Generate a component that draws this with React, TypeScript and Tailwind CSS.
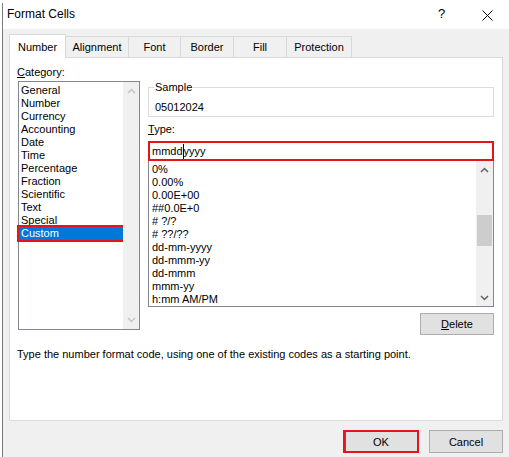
import React from "react";

const categories = ["General", "Number", "Currency", "Accounting", "Date", "Time", "Percentage", "Fraction", "Scientific", "Text", "Special", "Custom"];
const formats = ["0%", "0.00%", "0.00E+00", "##0.0E+0", "# ?/?", "# ??/??", "dd-mm-yyyy", "dd-mmm-yy", "dd-mmm", "mmm-yy", "h:mm AM/PM"];
const tabs = [
  { label: "Number", w: "w-[57px]" },
  { label: "Alignment", w: "w-[64px]" },
  { label: "Font", w: "w-[53px]" },
  { label: "Border", w: "w-[54px]" },
  { label: "Fill", w: "w-[54px]" },
  { label: "Protection", w: "w-[66px]" },
];

const Chevron = ({ up, color }: { up?: boolean; color: string }) => (
  <svg width="9" height="6" viewBox="0 0 9 6">
    <polyline
      points={up ? "1,5 4.5,1.5 8,5" : "1,1 4.5,4.5 8,1"}
      fill="none"
      stroke={color}
      strokeWidth="1.5"
    />
  </svg>
);

export default function App() {
  return (
    <div className="w-[509px] h-[457px] bg-white overflow-hidden font-['Liberation_Sans',Arial,sans-serif] text-[11px] text-black">
      <div className="ml-[2px] mt-[3px] h-[454px] border-l border-[#7a7a7a] bg-[#f0f0f0] flex flex-col">
        {/* Title bar */}
        <div className="h-[26px] shrink-0 bg-white flex items-start pt-[4px] pl-[4px] leading-[14px]">
          <span className="flex-1 text-[12px]">Format Cells</span>
          <span className="w-[12px] text-[13px] mr-[32px]">?</span>
          <svg width="11" height="11" viewBox="0 0 11 11" className="mt-[3px] mr-[16px]">
            <path d="M0.5 0.5 L10.5 10.5 M10.5 0.5 L0.5 10.5" stroke="#000" strokeWidth="1" />
          </svg>
        </div>

        {/* Tabs */}
        <div className="h-[28px] shrink-0 flex items-end pl-[6px]">
          {tabs.map((t, i) =>
            i === 0 ? (
              <div
                key={t.label}
                className={`${t.w} h-[24px] -mb-px relative z-10 bg-white border border-b-0 border-[#d9d9d9] flex items-center justify-center leading-[14px]`}
              >
                {t.label}
              </div>
            ) : (
              <div
                key={t.label}
                className={`${t.w} h-[21px] -ml-px bg-[#f0f0f0] border border-b-0 border-[#d9d9d9] flex items-center justify-center leading-[14px]`}
              >
                {t.label}
              </div>
            )
          )}
        </div>

        {/* Tab panel */}
        <div className="ml-[6px] w-[494px] h-[364px] shrink-0 bg-white border border-[#d9d9d9] flex flex-col">
          <div className="flex">
            {/* Category */}
            <div className="pt-[8px] pl-[7px]">
              <div className="leading-[13px]">
                <span className="underline">C</span>ategory:
              </div>
              <div className="mt-[2px] ml-[1px] w-[122px] h-[249px] border border-[#828790] flex">
                <div className="flex-1 pt-[2px]">
                  {categories.map((c) =>
                    c === "Custom" ? (
                      <div key={c} className="h-[13px] leading-[13px] pl-[2px] bg-[#0078d7] text-white outline-2 outline-[#e8121d]">
                        {c}
                      </div>
                    ) : (
                      <div key={c} className="h-[13px] leading-[13px] pl-[2px]">
                        {c}
                      </div>
                    )
                  )}
                </div>
                <div className="w-[16px] bg-[#f0f0f0] flex flex-col justify-between items-center py-[6px]">
                  <Chevron up color="#c4c4c4" />
                  <Chevron color="#c4c4c4" />
                </div>
              </div>
            </div>

            {/* Right column */}
            <div className="ml-[8px] w-[346px] pt-[22px] flex flex-col">
              <fieldset className="h-[37px] border border-[#dcdcdc] px-[5px]">
                <legend className="px-[1px] leading-[14px]">Sample</legend>
                <div className="leading-[14px] pt-[6px] pl-[1px]">05012024</div>
              </fieldset>

              <div className="mt-[6px] leading-[13px]">
                <span className="underline">T</span>ype:
              </div>
              <div className="mt-[5px] h-[20px] border-2 border-[#e8121d] bg-white flex items-center pl-[2px] leading-[14px]">
                <span>mmdd</span>
                <span className="w-px h-[15px] bg-black"></span>
                <span>yyyy</span>
              </div>
              <div className="h-[146px] border border-t-0 border-[#828790] flex">
                <div className="flex-1 pt-[2px] pl-[3px]">
                  {formats.map((f) => (
                    <div key={f} className="h-[13px] leading-[13px] whitespace-pre">
                      {f}
                    </div>
                  ))}
                </div>
                <div className="w-[17px] bg-[#f0f0f0] flex flex-col">
                  <div className="h-[17px] flex items-center justify-center">
                    <Chevron up color="#606060" />
                  </div>
                  <div className="mt-[37px] mx-[1px] h-[31px] bg-[#cdcdcd]"></div>
                  <div className="flex-1"></div>
                  <div className="h-[17px] flex items-center justify-center">
                    <Chevron color="#606060" />
                  </div>
                </div>
              </div>
              <div className="mt-[6px] self-end w-[74px] h-[22px] bg-[#e1e1e1] border border-[#adadad] flex items-center justify-center leading-[14px]">
                <span className="underline">D</span>elete
              </div>
            </div>
          </div>

          <div className="mt-[12px] pl-[7px] leading-[14px]">
            Type the number format code, using one of the existing codes as a starting point.
          </div>
        </div>

        {/* Bottom buttons */}
        <div className="mt-[9px] flex justify-end gap-[10px] pr-[6px]">
          <div className="w-[76px] h-[23px] border-2 border-[#e8121d] bg-[#e1e1e1] shadow-[inset_1px_0_0_#0078d7] flex items-center justify-center leading-[14px]">
            OK
          </div>
          <div className="w-[74px] h-[23px] border border-[#adadad] bg-[#e1e1e1] flex items-center justify-center leading-[14px]">
            Cancel
          </div>
        </div>
      </div>
    </div>
  );
}
